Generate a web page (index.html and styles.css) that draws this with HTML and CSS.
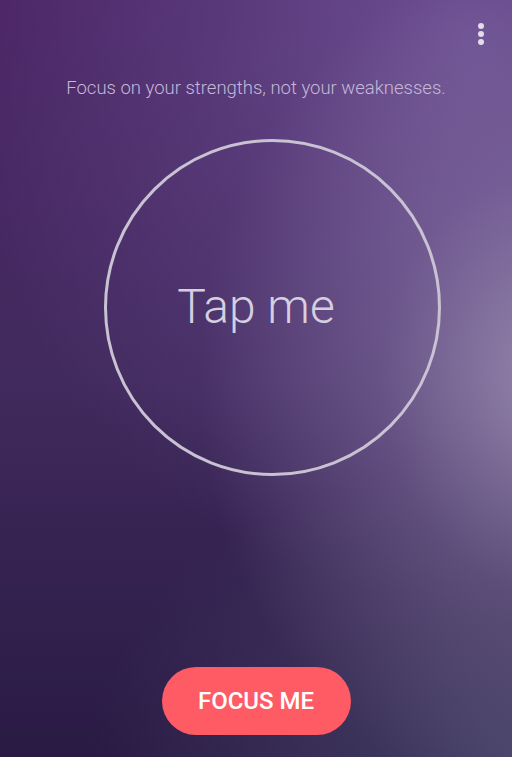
FILE: index.html
```html
<!DOCTYPE html>
<html>
<head>
<meta charset="utf-8">
<link rel="stylesheet" href="styles.css">
</head>
<body>
<div class="screen">
  <div class="menu">
    <span class="dot"></span><span class="dot"></span><span class="dot"></span>
  </div>
  <p class="quote">Focus on your strengths, not your weaknesses.</p>
  <div class="circle">
    <span class="tap">Tap me</span>
  </div>
  <div class="spacer"></div>
  <div class="actions">
    <button class="focus-btn">FOCUS ME</button>
  </div>
</div>
</body>
</html>
```
FILE: styles.css
```css
html, body {
  margin: 0;
  padding: 0;
}
body {
  width: 512px;
  height: 757px;
  overflow: hidden;
  font-family: Roboto, "Noto Sans", sans-serif;
}
.screen {
  position: relative;
  width: 512px;
  height: 757px;
  display: flex;
  flex-direction: column;
  background:
    radial-gradient(ellipse 360px 430px at 560px 380px, rgba(178,168,198,0.72) 0%, rgba(150,135,178,0.35) 50%, rgba(130,110,160,0) 100%),
    radial-gradient(ellipse 520px 560px at 470px 40px, rgba(115,88,155,0.85) 0%, rgba(105,80,145,0.45) 50%, rgba(100,75,140,0) 100%),
    radial-gradient(ellipse 420px 300px at 512px 757px, rgba(72,68,105,0.9) 0%, rgba(72,68,105,0) 100%),
    linear-gradient(to bottom, #4b2365 0%, #412a5d 50%, #291a44 100%);
}
.menu {
  position: absolute;
  top: 23px;
  right: 28px;
  display: flex;
  flex-direction: column;
  gap: 2px;
}
.dot {
  width: 6px;
  height: 6px;
  border-radius: 50%;
  background: #e4dcec;
}
.quote {
  margin: 77px 0 0;
  text-align: center;
  font-size: 18.5px;
  line-height: 22px;
  font-weight: 300;
  color: #c6b8d6;
}
.circle {
  box-sizing: border-box;
  margin: 40px 0 0 104px;
  width: 337px;
  height: 337px;
  border: 3px solid #c9c2d3;
  border-radius: 50%;
  display: flex;
  align-items: center;
  justify-content: center;
  padding-right: 33px;
}
.tap {
  font-size: 48px;
  font-weight: 300;
  color: #d6cfe0;
  margin-top: -3px;
}
.spacer {
  flex: 1;
}
.actions {
  display: flex;
  justify-content: center;
  padding-bottom: 22px;
}
.focus-btn {
  width: 189px;
  height: 68px;
  border: none;
  border-radius: 34px;
  background: #ff5b65;
  color: #ffffff;
  font-family: Roboto, sans-serif;
  font-size: 24px;
  font-weight: 500;
  padding: 0;
}
```
